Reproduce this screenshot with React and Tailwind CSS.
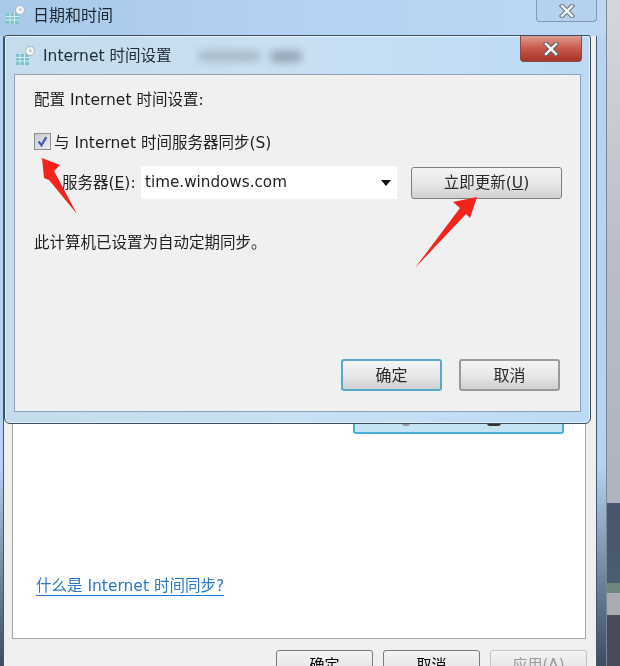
const uiFont = { fontFamily: '"DejaVu Sans", "Noto Sans CJK SC", sans-serif' };

function ClockIcon() {
  return (
    <svg width="20" height="20" viewBox="0 0 20 20" className="shrink-0">
      <rect x="1" y="8" width="13" height="11" fill="#7cc3cf" />
      <path d="M1 11.5h13M1 15h13M5 8v11M9.5 8v11" stroke="#d3eef2" strokeWidth="1" />
      <circle cx="15" cy="5" r="4.5" fill="#f1f5f6" stroke="#a9b6bc" strokeWidth="1" />
      <path d="M15 3v2.2h1.8" stroke="#8a979e" strokeWidth="0.8" fill="none" />
    </svg>
  );
}

function CloseGlyph({ color = "#f4f6f6", stroke = "#4a5560" }) {
  return (
    <svg width="16" height="14" viewBox="0 0 16 14">
      <path d="M3 2l10 10M13 2L3 12" stroke={stroke} strokeWidth="4.4" strokeLinecap="square" />
      <path d="M3 2l10 10M13 2L3 12" stroke={color} strokeWidth="2.6" strokeLinecap="square" />
    </svg>
  );
}

function Button({ className, children }) {
  return (
    <button className={`flex items-center justify-center rounded-[3px] bg-gradient-to-b from-[#f4f4f4] via-[#e8e8e8] to-[#d0d0d0] text-[#2a2a2a] ${className}`}>
      {children}
    </button>
  );
}

function Desktop() {
  return (
    <div className="absolute right-0 top-0 flex h-[666px] w-[14px] flex-col">
      <div className="h-[503px] bg-gradient-to-b from-[#d3d8e0] via-[#b9bec8] to-[#aeb4bf]" />
      <div className="h-[80px] bg-gradient-to-b from-[#46556b] to-[#4d5d70]" />
      <div className="h-[10px] bg-[#6f8580]" />
      <div className="h-[22px] bg-[#a9acb2]" />
      <div className="flex-1 bg-[#474b5c]" />
    </div>
  );
}

function BackWindow() {
  return (
    <div className="absolute left-0 top-0 flex h-[666px] w-[607px] flex-col border-r border-[#7b8794] bg-gradient-to-b from-[#b5d3f3] via-[#b5d3f3] via-70% to-[#3c4c63]">
      <div className="flex h-[36px] shrink-0 items-start bg-gradient-to-r from-[#a9c9e8] via-[#b4d2f2] to-[#bcd8f5] pl-[5px] pt-[5px]">
        <ClockIcon />
        <span className="ml-[8px] mt-[1px] text-[16px] leading-[20px] text-[#1c2733]">日期和时间</span>
        <div className="ml-auto mr-[9px] -mt-[5px] flex h-[22px] w-[61px] items-center justify-center rounded-b-[4px] border border-t-0 border-[#7f98b3] bg-[#b5d1ee]">
          <CloseGlyph color="#eef1f1" stroke="#59646e" />
        </div>
      </div>
      <div className="ml-[3px] mr-[9px] flex flex-1 flex-col border-x border-[#4a5564] bg-[#efefef] pl-[8px] pr-[10px]">
        <div className="mt-[387px] flex h-[216px] shrink-0 flex-col border-x border-b border-[#a5a8aa] bg-white pb-[42px] pl-[23px]">
          <a className="mt-auto w-fit border-b border-[#2a78c8] text-[15.5px] leading-[17px] text-[#2a78c8]">什么是 Internet 时间同步?</a>
        </div>
        <div className="flex items-start justify-end gap-[10px] pl-[4px] pt-[11px] -mr-[1px]">
          <Button className="h-[30px] w-[97px] shrink-0 border border-[#7c7c7c] text-[15px]"><span className="text-black">确定</span></Button>
          <Button className="h-[30px] w-[97px] shrink-0 border border-[#7c7c7c] text-[15px]"><span className="text-black">取消</span></Button>
          <Button className="h-[30px] w-[97px] shrink-0 border border-[#c4c4c4] text-[15px]"><span className="text-[#9a9a9a]">应用(A)</span></Button>
        </div>
      </div>
    </div>
  );
}

function FrontWindow() {
  return (
    <div className="absolute left-[4px] top-[35px] flex h-[389px] w-[587px] flex-col rounded-t-[3px] rounded-b-[6px] border border-[#3b4c5e] bg-gradient-to-r from-[#c5dcec] via-[#c9e0f3] to-[#bcdaf5] shadow-[inset_0_0_0_1px_#e6f2fb]">
      <div className="relative flex h-[38px] shrink-0 items-center pl-[10px] pt-[2px]">
        <ClockIcon />
        <span className="ml-[8px] mt-[2px] text-[15.5px] text-[#222e38]">Internet 时间设置</span>
        <div className="ml-[28px] h-[10px] w-[60px] bg-[#8d9aa6] opacity-60 blur-[4px]" />
        <div className="ml-[12px] h-[11px] w-[30px] bg-[#6b7884] opacity-60 blur-[4px]" />
        <div className="absolute right-[8px] top-0 flex h-[26px] w-[62px] items-center justify-center rounded-b-[4px] border border-t-0 border-[#8c4a42] bg-gradient-to-b from-[#dd9c8f] via-[#c9574a] to-[#a83628]">
          <CloseGlyph />
        </div>
      </div>
      <div className="mx-[9px] flex h-[338px] flex-col border border-[#8ea3b5] bg-[#f0f0f0] pl-[19px] pr-[18px]">
        <p className="mt-[15px] text-[15.5px] leading-[20px] text-[#1f1f1f]">配置 Internet 时间设置:</p>
        <label className="mt-[22px] flex h-[20px] items-center">
          <span className="mb-[2px] flex h-[17px] w-[17px] items-center justify-center border border-[#8f8f8f] bg-gradient-to-br from-[#c6cad2] to-[#eceef1]">
            <svg width="13" height="13" viewBox="0 0 12 12">
              <path d="M2.5 6l2.5 3.5L9.5 2" stroke="#4558a8" strokeWidth="2" fill="none" />
            </svg>
          </span>
          <span className="ml-[3px] mt-[4px] text-[15.5px] text-[#1f1f1f]">与 Internet 时间服务器同步(S)</span>
        </label>
        <div className="mt-[14px] flex items-center">
          <span className="ml-[28px] w-[79px] pt-[2px] text-[15.5px] text-[#1f1f1f]">服务器(<span className="underline">E</span>):</span>
          <div className="flex h-[33px] w-[256px] items-center justify-between bg-white pl-[4px] pr-[6px] text-[15.2px] text-[#222]">
            time.windows.com
            <svg width="10" height="6" viewBox="0 0 10 6"><path d="M0 0h10L5 6z" fill="#111" /></svg>
          </div>
          <Button className="ml-[14px] h-[32px] w-[151px] border border-[#7b7f83] pt-[2px] text-[15.5px]">立即更新(<span className="underline">U</span>)</Button>
        </div>
        <p className="mt-[34px] text-[15.5px] leading-[20px] text-[#1f1f1f]">此计算机已设置为自动定期同步。</p>
        <div className="mt-auto mb-[20px] mr-[2px] flex justify-end gap-[17px]">
          <Button className="h-[32px] w-[101px] border-2 border-[#56a9c9] pt-[2px] text-[16px]">确定</Button>
          <Button className="h-[32px] w-[101px] border-2 border-[#9a9a9a] pt-[2px] text-[16px]">取消</Button>
        </div>
      </div>
    </div>
  );
}

export default function App() {
  return (
    <div className="h-[666px] w-[620px] overflow-hidden bg-white">
      <div className="relative h-[666px] w-[620px] blur-[0.5px]" style={uiFont}>
        <Desktop />
        <BackWindow />

        {/* the blue button of the back window shows under the dialog */}
        <div className="absolute left-[353px] top-[418px] h-[16px] w-[211px] rounded-b-[3px] border-2 border-[#4bb0d8] bg-[#c4e3f3]" />
        <div className="absolute left-[402px] top-[423px] h-[3px] w-[8px] rounded-b-full bg-[#9a9a9a]" />
        <div className="absolute left-[487px] top-[423px] h-[3px] w-[14px] rounded-b-full bg-[#333]" />

        <FrontWindow />

        <svg className="pointer-events-none absolute left-0 top-0" width="620" height="666" viewBox="0 0 620 666">
          <polygon points="42,158 60,165 54,171 77,214 49,180 44,178" fill="#f5231b" />
          <polygon points="477,197 453,202 460,208 415,268 466,214 470,218" fill="#f5231b" />
        </svg>
      </div>
    </div>
  );
}
